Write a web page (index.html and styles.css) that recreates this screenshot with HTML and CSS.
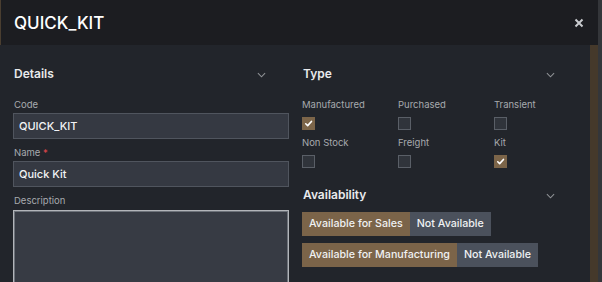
FILE: index.html
```html
<!DOCTYPE html>
<html>
<head>
<meta charset="utf-8">
<link rel="stylesheet" href="styles.css">
</head>
<body>
<div class="dialog">
  <header class="dlg-head">
    <h1 class="dlg-title">QUICK_KIT</h1>
    <svg class="dlg-close" viewBox="0 0 10 10"><path d="M1.5 1.5l7 7M8.5 1.5l-7 7"/></svg>
  </header>
  <div class="dlg-body">
    <div class="content">
      <section class="col">
        <div class="sec-head"><span>Details</span><svg class="chev" viewBox="0 0 10 6"><path d="M1 1l4 4 4-4"/></svg></div>
        <label class="lbl">Code</label>
        <div class="input">QUICK_KIT</div>
        <label class="lbl">Name <span class="req">*</span></label>
        <div class="input">Quick Kit</div>
        <label class="lbl">Description</label>
        <div class="textarea"></div>
      </section>
      <section class="col">
        <div class="sec-head"><span>Type</span><svg class="chev" viewBox="0 0 10 6"><path d="M1 1l4 4 4-4"/></svg></div>
        <div class="checks">
          <div class="chk"><span class="lbl">Manufactured</span><span class="box on"><svg viewBox="0 0 12 12"><path d="M3 6.3l2.1 2L9.2 3.8"/></svg></span></div>
          <div class="chk"><span class="lbl">Purchased</span><span class="box"></span></div>
          <div class="chk"><span class="lbl">Transient</span><span class="box"></span></div>
          <div class="chk"><span class="lbl">Non Stock</span><span class="box"></span></div>
          <div class="chk"><span class="lbl">Freight</span><span class="box"></span></div>
          <div class="chk"><span class="lbl">Kit</span><span class="box on"><svg viewBox="0 0 12 12"><path d="M3 6.3l2.1 2L9.2 3.8"/></svg></span></div>
        </div>
        <div class="sec-head avail"><span>Availability</span><svg class="chev" viewBox="0 0 10 6"><path d="M1 1l4 4 4-4"/></svg></div>
        <div class="toggle"><span class="opt sel">Available for Sales</span><span class="opt">Not Available</span></div>
        <div class="toggle"><span class="opt sel">Available for Manufacturing</span><span class="opt">Not Available</span></div>
      </section>
    </div>
    <div class="scroll"></div>
  </div>
</div>
</body>
</html>
```
FILE: styles.css
```css
* { box-sizing: border-box; }
html, body { margin: 0; padding: 0; }
body {
  width: 602px;
  height: 282px;
  overflow: hidden;
  background: #22252b;
  font-family: Inter, "Noto Sans", sans-serif;
  color: #eceef0;
}
.dialog {
  height: 282px;
  display: flex;
  flex-direction: column;
  border-right: 4px solid #34363a;
}
.dlg-head {
  height: 45px;
  flex: none;
  background: #1c1d21;
  display: flex;
  align-items: center;
  justify-content: space-between;
  padding: 0 14px 0 14px;
  border-left: 1px solid #4a3e30;
}
.dlg-title {
  margin: 0;
  font-size: 17px;
  font-weight: 500;
  color: #ffffff;
  margin-left: -1px;
  margin-top: 1px;
}
.dlg-close {
  width: 10px;
  height: 10px;
  fill: none;
  stroke: #c9cbcf;
  stroke-width: 2;
}
.dlg-body {
  flex: 1;
  display: flex;
  background: #22252b;
  overflow: hidden;
}
.content {
  flex: 1;
  display: grid;
  grid-template-columns: 276px 276px;
  column-gap: 13px;
  padding: 0 0 0 13px;
}
.scroll {
  width: 8px;
  flex: none;
  background: #45392b;
}
.sec-head {
  height: 40px;
  padding-top: 20px;
  display: flex;
  justify-content: space-between;
  align-items: flex-start;
  font-size: 12px;
  font-weight: 600;
  color: #e9eaec;
  padding-left: 1px;
  padding-right: 23px;
}
.sec-head span { line-height: 18px; }
.chev {
  width: 9px;
  height: 6px;
  margin-top: 7px;
  fill: none;
  stroke: #8f9296;
  stroke-width: 1.2;
}
.lbl {
  display: block;
  font-size: 9.5px;
  color: #a7aaae;
  line-height: 14px;
  padding-left: 1px;
  margin-top: 13px;
}
.req { color: #e0464b; }
.input {
  height: 26px;
  margin-top: 1px;
  background: #353942;
  border: 1px solid #50555e;
  font-size: 11px;
  font-weight: 500;
  color: #f2f3f5;
  padding: 0 5px;
  line-height: 24px;
}
.col > .input + .lbl { margin-top: 7px; }
.textarea {
  height: 80px;
  margin-top: 2px;
  background: #373b44;
  border: 1px solid #b2b5ba;
  box-shadow: inset 0 0 0 1px #6d727a;
}
.checks {
  display: grid;
  grid-template-columns: 96px 96px 84px;
  margin-top: 13px;
}
.chk { display: flex; flex-direction: column; }
.chk .lbl { margin-top: 0; padding-left: 0; line-height: 14px; }
.chk .box {
  width: 13px;
  height: 13px;
  margin-top: 5px;
  margin-bottom: 6px;
  background: #30343b;
  border: 1px solid #5a5f67;
}
.chk .box.on {
  background: #7c6549;
  border-color: #7c6549;
}
.chk .box svg {
  display: block;
  width: 11px;
  height: 11px;
  fill: none;
  stroke: #ffffff;
  stroke-width: 1.8;
  stroke-linecap: round;
  stroke-linejoin: round;
}
.sec-head.avail { height: 33px; padding-top: 12px; }
.toggle {
  display: flex;
  height: 24px;
  margin-top: 5px;
}
.toggle + .toggle { margin-top: 7px; }
.opt {
  font-size: 10.7px;
  font-weight: 500;
  color: #f0f1f3;
  background: #4b515c;
  padding: 0 7px;
  line-height: 24px;
}
.opt.sel { background: #7b6449; }
```
